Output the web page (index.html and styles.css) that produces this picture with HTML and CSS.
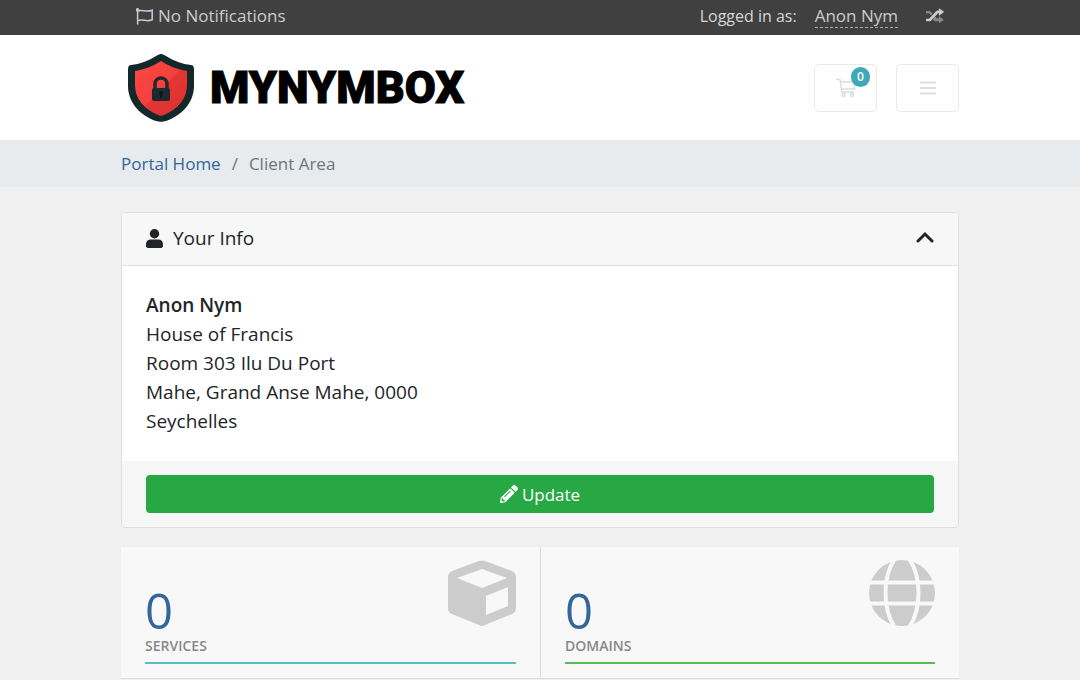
FILE: index.html
```html
<!DOCTYPE html>
<html lang="en">
<head>
<meta charset="utf-8">
<meta name="viewport" content="width=device-width, initial-scale=1">
<title>Client Area - MYNYMBOX</title>
<link rel="stylesheet" href="styles.css">
</head>
<body>
<div class="topbar">
  <div class="container topbar-inner">
    <button class="topbar-btn" type="button">
      <svg class="flag-icon" viewBox="0 0 18 17" aria-hidden="true"><path d="M1.600 1v15.500M1.600 3c5-2.200 8 1.800 14.600-.8v9.600c-6 2.600-9-1.300-14.600.8"/><circle cx="1.600" cy="1.800" r="1"/></svg>
      <span>No Notifications</span>
    </button>
    <div class="account">
      <span class="account-label">Logged in as:</span>
      <a class="account-name" href="#account">Anon Nym</a>
      <button class="topbar-btn" type="button" aria-label="Return to admin area">
        <svg class="shuffle-icon" viewBox="0 0 512 512" aria-hidden="true"><path class="dim" d="M0 116h90c20 0 32 6 44 20l52 56-44 47-57-61H0zM244 256l57 62h67v-56l128 90v24l-128 88v-56h-94c-18 0-28-5-40-16l-34-38z"/><path d="M0 334h86l200-216c12-14 26-20 44-20h38V38l136 92v22l-136 94v-70h-26L142 390c-12 12-26 18-44 18H0z"/></svg>
      </button>
    </div>
  </div>
</div>

<header class="masthead">
  <div class="container masthead-inner">
    <a class="logo" href="#home">
      <svg class="shield" viewBox="0 0 66 68" aria-hidden="true">
        <defs><linearGradient id="red" x1="0" y1="0" x2="1" y2="1"><stop offset="0" stop-color="#fb4a44"/><stop offset=".5" stop-color="#f53f3c"/><stop offset=".52" stop-color="#e43735"/><stop offset="1" stop-color="#dc302d"/></linearGradient></defs>
        <path fill="#13282b" d="M33 0c2 0 3 1 5 2 8 5 16 8 25 9 2 0 3 2 3 4v17c0 17-13 30-28 35-4 1-6 1-10 0C13 62 0 49 0 32V15c0-2 1-4 3-4 9-1 17-4 25-9 2-1 3-2 5-2z"/>
        <path fill="url(#red)" d="M33 7c8 5 15 8 26 10v14c0 14-9 24-23 30-2 1-4 1-6 0C16 55 7 45 7 31V17C18 15 25 12 33 7z"/>
        <path fill="none" stroke="#24282b" stroke-width="3.500" d="M27 36v-6c0-8 12-8 12 0v6"/>
        <rect x="24" y="34" width="18" height="13" rx="2" fill="#1b2a30"/>
        <path fill="#0a1519" d="M31 39a2 2 0 1 1 4 0l-1 2v3h-2v-3z"/>
      </svg>
      <span class="wordmark">MYNYMBOX</span>
    </a>
    <div class="tools">
      <a class="tool" href="#cart" aria-label="Shopping cart">
        <svg class="cart-icon" viewBox="0 0 20 20" aria-hidden="true"><path d="M0 1.500h4l2 12.500h12M5 4h13.500v7H6"/><circle cx="7.500" cy="17" r="1.500"/><circle cx="16" cy="17" r="1.500"/></svg>
        <span class="badge">0</span>
      </a>
      <button class="tool" type="button" aria-label="Toggle menu">
        <svg class="menu-icon" viewBox="0 0 16 16" aria-hidden="true"><path d="M0 2.500h16M0 8h16M0 13.500h16"/></svg>
      </button>
    </div>
  </div>
</header>

<nav class="breadcrumb-bar" aria-label="Breadcrumb">
  <ol class="container breadcrumb">
    <li><a href="#home">Portal Home</a></li>
    <li class="current" aria-current="page">Client Area</li>
  </ol>
</nav>

<main class="container content">
  <section class="card">
    <div class="card-header">
      <svg class="user-icon" viewBox="0 0 18 20" aria-hidden="true"><circle cx="9" cy="5" r="5"/><path d="M5 11h8c3 0 5 2 5 5v2c0 1-1 2-2 2H2c-1 0-2-1-2-2v-2c0-3 2-5 5-5z"/></svg>
      <h2 class="card-title">Your Info</h2>
      <button class="collapse" type="button" aria-label="Collapse Your Info">
        <svg class="chevron" viewBox="0 0 18 16" aria-hidden="true"><path d="M2 10l7-7 7 7"/></svg>
      </button>
    </div>
    <address class="card-body">
      <strong>Anon Nym</strong><br>
      House of Francis<br>
      Room 303 Ilu Du Port<br>
      Mahe, Grand Anse Mahe, 0000<br>
      Seychelles
    </address>
    <div class="card-footer">
      <button class="update" type="button">
        <svg class="pencil" viewBox="0 0 512 512" aria-hidden="true"><path d="M498 142l-46 46c-5 5-13 5-17 0L324 77c-5-5-5-12 0-17l46-46c19-19 49-19 68 0l60 60c19 19 19 49 0 68zM284 100L22 362 0 484c-3 16 12 30 28 28l122-22 262-262c5-5 5-13 0-17L301 100c-4-5-12-5-17 0zM124 340c-5-5-5-14 0-20l154-154c6-5 15-5 20 0s5 14 0 20L144 340c-6 5-15 5-20 0zm-36 84h48v36l-64 12-32-32 12-64h36v48z"/></svg>
        <span>Update</span>
      </button>
    </div>
  </section>

  <div class="tiles">
    <a class="tile" href="#services">
      <svg class="tile-icon" viewBox="0 0 68 68" aria-hidden="true"><path fill-rule="evenodd" d="M31 2q3-1 6 0l27 10q4 2 4 6v31q0 4-4 6L37 66q-3 2-6 0L4 55q-4-2-4-6V18q0-4 4-6zM34 10L9 19l25 10 25-10zM38 37v19l22-9V28z"/></svg>
      <span class="stat">0</span>
      <span class="tile-title">Services</span>
      <span class="line teal"></span>
    </a>
    <a class="tile" href="#domains">
      <svg class="tile-icon globe" viewBox="0 0 66 66" aria-hidden="true"><circle cx="33" cy="33" r="33"/><g class="gaps"><path d="M0 22.500h66M0 43.500h66"/><path d="M27-3C13 16 13 50 27 69M39-3c14 19 14 53 0 72"/></g></svg>
      <span class="stat">0</span>
      <span class="tile-title">Domains</span>
      <span class="line green"></span>
    </a>
  </div>
</main>
</body>
</html>
```
FILE: styles.css
```css
* { box-sizing: border-box; }

body {
  margin: 0;
  background: #f0f0f0;
  color: #212529;
  font-family: "Open Sans", sans-serif;
  font-size: 19px;
  line-height: 29px;
}

a { color: #336699; text-decoration: none; }
button { font: inherit; cursor: pointer; }
svg { display: block; flex: none; }

.container {
  width: calc(100% - 32px);
  max-width: 838px;
  margin: 0 auto;
}

.topbar {
  background: #404040;
  color: #d6d6d6;
  font-size: 17px;
  line-height: 24px;
}
.topbar-inner {
  display: flex;
  flex-wrap: wrap;
  justify-content: space-between;
  min-height: 35px;
  padding: 4px 15px;
}
.topbar-btn {
  display: flex;
  align-items: center;
  gap: 4px;
  padding: 0;
  border: 0;
  background: none;
  color: #ccc;
  height: 24px;
}
.flag-icon {
  width: 18px;
  height: 17px;
  fill: none;
  stroke: currentColor;
  stroke-width: 1.5;
}
.account { display: flex; gap: 18px; }
.account-label { font-size: 16px; }
.account-name {
  color: #ccc;
  border-bottom: 1px dashed #aaa;
  height: 24px;
}
.account .topbar-btn { margin-left: 10px; }
.shuffle-icon { width: 18px; height: 18px; fill: #ccc; }
.shuffle-icon .dim { fill: #888; }

.masthead { background: #fff; }
.masthead-inner {
  display: flex;
  align-items: center;
  justify-content: space-between;
  min-height: 105px;
}
.logo {
  display: flex;
  align-items: center;
  gap: 16px;
  padding-left: 7px;
  color: #000;
}
.shield { width: 66px; height: 68px; }
.wordmark {
  font: 900 45px/56px Roboto, sans-serif;
  -webkit-text-stroke: 1px #000;
}
.tools { display: flex; gap: 19px; }
.tool {
  position: relative;
  display: flex;
  align-items: center;
  justify-content: center;
  width: 63px;
  height: 48px;
  padding: 0;
  border: 1px solid #e9e9e9;
  border-radius: 5px;
  background: #fff;
}
.cart-icon, .menu-icon { fill: none; stroke: #ddd; }
.cart-icon { width: 20px; height: 20px; stroke-width: 1.5; }
.menu-icon { width: 16px; height: 16px; stroke-width: 2; }
.badge {
  position: absolute;
  top: 2px;
  right: 6px;
  width: 19px;
  height: 20px;
  border-radius: 10px;
  background: #3fa9b9;
  color: #fff;
  font-size: 12px;
  font-weight: 600;
  line-height: 19px;
  text-align: center;
}

.breadcrumb-bar { background: #e7ebee; }
.breadcrumb {
  display: flex;
  padding: 9px 0;
  list-style: none;
  color: #6c757d;
  font-size: 17px;
}
.breadcrumb .current::before {
  content: "/";
  padding: 0 11px;
}

.content { padding-top: 25px; }
.card {
  border: 1px solid #dfdfdf;
  border-radius: 5px;
  background: #fff;
  overflow: hidden;
}
.card-header {
  display: flex;
  align-items: center;
  gap: 10px;
  padding: 11px 24px 12px;
  border-bottom: 1px solid #dfdfdf;
  background: #f7f7f7;
}
.user-icon { width: 17px; height: 19px; fill: currentColor; }
.card-title { margin: 0; font-size: 19px; font-weight: 400; }
.collapse {
  margin-left: auto;
  padding: 0;
  border: 0;
  background: none;
  color: inherit;
}
.chevron {
  width: 18px;
  height: 16px;
  fill: none;
  stroke: currentColor;
  stroke-width: 3;
  stroke-linecap: round;
}
.card-body {
  padding: 25px 24px;
  font-style: normal;
}
.card-body strong { font-weight: 600; }
.card-footer { padding: 14px 24px; background: #f6f6f6; }
.update {
  display: flex;
  align-items: center;
  justify-content: center;
  gap: 4px;
  width: 100%;
  height: 38px;
  padding: 0;
  border: 0;
  border-radius: 4px;
  background: #28a745;
  color: #fff;
  font-size: 17px;
}
.pencil { width: 18px; height: 18px; fill: currentColor; }

.tiles {
  display: grid;
  grid-template-columns: 1fr 1fr;
  margin-top: 19px;
}
.tile {
  position: relative;
  display: flex;
  flex-direction: column;
  padding: 35px 24px 14px;
  border-bottom: 1px solid #ddd;
  background: #f8f8f8;
}
.tile + .tile { border-left: 1px solid #ddd; }
.tile-icon {
  position: absolute;
  top: 12px;
  right: 24px;
  width: 68px;
  height: 68px;
  fill: #ccc;
}
.globe { width: 66px; height: 66px; top: 13px; }
.gaps { fill: none; stroke: #f8f8f8; stroke-width: 4; }
.stat { font-size: 49px; line-height: 56px; }
.tile-title {
  color: #888;
  font-size: 14px;
  font-weight: 600;
  line-height: 15px;
  text-transform: uppercase;
}
.line { height: 2px; margin-top: 9px; }
.teal { background: #5bbdca; }
.green { background: #5cb85c; }
```
